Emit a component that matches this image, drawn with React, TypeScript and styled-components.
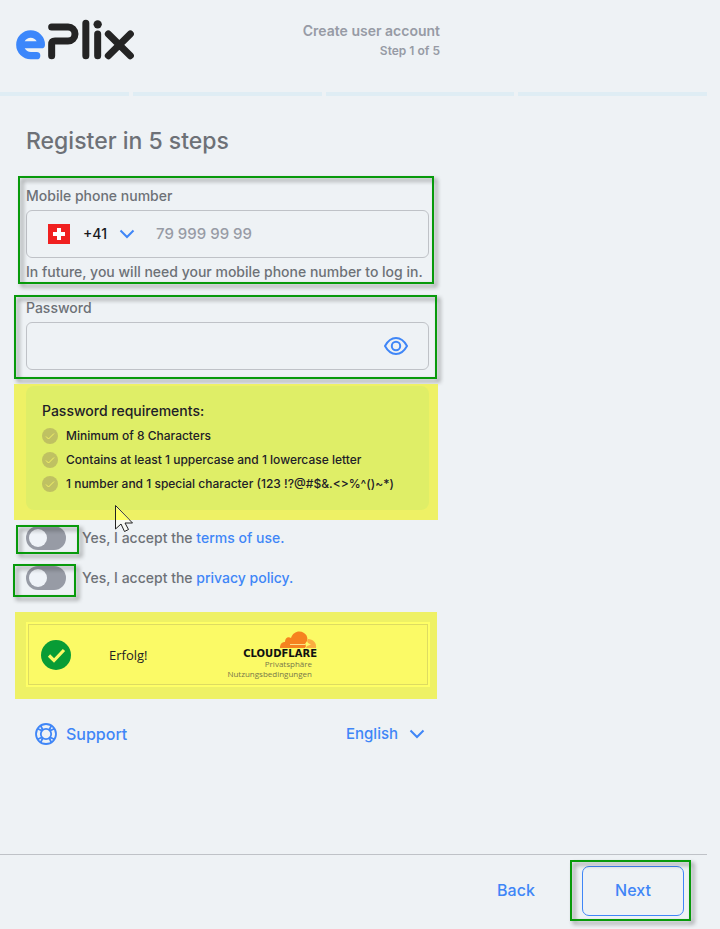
import React from "react";
import styled, { createGlobalStyle, css } from "styled-components";

const blue = "#3f86f7";
const gray = "#6d7177";
const muted = "#979ba5";
const line = "#bfc2c7";
const green = "#079a0b";

const GlobalStyle = createGlobalStyle`
  * { box-sizing: border-box; }
  body {
    margin: 0;
    background: #eef2f5;
    color: ${gray};
    font: 500 14px/20px Inter, "Liberation Sans", sans-serif;
  }
  button, input, select { font: inherit; color: inherit; }
  a { color: ${blue}; text-decoration: none; }
`;

const Page = styled.div`
  min-height: 100vh;
  display: flex;
  flex-direction: column;
  padding-right: 13px;
`;

const Header = styled.header`
  display: flex;
  justify-content: space-between;
  align-items: flex-start;
  width: 100%;
  max-width: 440px;
  height: 92px;
  padding: 19px 0 0 16px;
`;

const HeaderText = styled.div`
  padding-top: 2px;
  text-align: right;
  color: ${muted};
  font-weight: 600;
`;

const StepText = styled.div`
  font-size: 12px;
`;

const Steps = styled.div`
  display: grid;
  grid-template-columns: 129fr 189fr 189fr 189fr;
  gap: 4px;
  height: 4px;
`;

const Step = styled.span`
  background: #dfedf4;
`;

const Main = styled.main`
  width: 100%;
  max-width: 455px;
  padding: 30px 26px 0;
  flex: 1;
`;

const Title = styled.h1`
  margin: 0 0 30px;
  font-size: 23px;
  line-height: 30px;
  font-weight: 500;
`;

const Marked = styled.div<{ $inset: string }>`
  position: relative;
  &::after {
    content: "";
    position: absolute;
    inset: ${(p) => p.$inset};
    border: 2px solid ${green};
    filter: drop-shadow(3px 3px 2px rgba(0, 0, 0, 0.45));
    pointer-events: none;
  }
`;

const Fields = styled.div`
  display: flex;
  flex-direction: column;
  gap: 16px;
`;

const Field = styled.div`
  display: flex;
  flex-direction: column;
  gap: 4px;
  white-space: nowrap;
`;

const InputBox = styled.div`
  display: flex;
  align-items: center;
  height: 48px;
  padding: 0 20px 0 21px;
  border: 1px solid ${line};
  border-radius: 6px;
`;

const TextInput = styled.input`
  flex: 1;
  min-width: 0;
  padding: 0;
  border: 0;
  outline: 0;
  background: transparent;
  font-size: 15px;
  &::placeholder { color: ${muted}; opacity: 1; }
`;

const PlainSelect = styled.select`
  appearance: none;
  border: 0;
  padding: 0;
  background: transparent;
  outline: 0;
`;

const CodeSelect = styled(PlainSelect)`
  width: 36px;
  margin-left: 13px;
  color: #17191d;
`;

const CodeChevron = styled.span`
  display: flex;
  margin-right: 21px;
`;

const IconButton = styled.button`
  display: flex;
  padding: 0;
  border: 0;
  background: transparent;
  color: ${blue};
`;

const Highlight = styled.div<{ $inset: string; $top: number }>`
  position: relative;
  isolation: isolate;
  margin-top: ${(p) => p.$top}px;
  &::before {
    content: "";
    position: absolute;
    inset: ${(p) => p.$inset};
    z-index: -1;
    background: #eef165;
  }
`;

const Requirements = styled.section`
  padding: 15px 16px;
  height: 124px;
  border-radius: 8px;
  background: #dfee67;
  color: #1d2028;
  font-size: 12px;
  white-space: nowrap;
`;

const ReqTitle = styled.h2`
  margin: 0 0 3px;
  font-size: 14px;
  line-height: 20px;
  font-weight: 500;
`;

const ReqList = styled.ul`
  margin: 0;
  padding: 0;
  list-style: none;
`;

const ReqItem = styled.li`
  display: flex;
  align-items: center;
  gap: 8px;
  height: 24px;
`;

const Cursor = styled.svg`
  position: absolute;
  left: 88px;
  top: 118px;
  z-index: 2;
`;

const Consents = styled.div`
  display: flex;
  flex-direction: column;
  gap: 16px;
  margin: 16px 0 0;
`;

const Consent = styled.div`
  display: flex;
  align-items: center;
  gap: 16px;
  height: 24px;
`;

const Toggle = styled.input`
  appearance: none;
  display: block;
  width: 40px;
  height: 24px;
  margin: 0;
  padding: 3px;
  border-radius: 12px;
  background: #979ba5;
  &::before {
    content: "";
    display: block;
    width: 18px;
    height: 18px;
    border-radius: 50%;
    background: #eff3f8;
  }
  &:checked { background: ${blue}; }
  &:checked::before { margin-left: auto; }
`;

const Widget = styled.section`
  height: 65px;
  padding: 2px;
  margin-right: -1px;
  background: #ffff66;
`;

const WidgetInner = styled.div`
  display: flex;
  align-items: center;
  height: 100%;
  padding: 0 110px 0 12px;
  border: 1px solid #dddb62;
  background: #fbfa66;
  color: #222;
  font-family: "Open Sans", "Noto Sans", sans-serif;
  font-weight: 400;
  font-size: 13px;
`;

const Status = styled.span`
  margin-left: 38px;
  flex: 1;
`;

const Vendor = styled.div`
  display: flex;
  flex-direction: column;
  align-items: flex-end;
`;

const VendorName = styled.span`
  font: 700 10px/10px "DejaVu Sans", sans-serif;
  color: #111;
`;

const VendorLink = styled.a`
  margin-right: 5px;
  font-size: 8px;
  line-height: 10px;
  color: #77774a;
`;

const Tools = styled.nav`
  display: flex;
  align-items: center;
  justify-content: space-between;
  height: 24px;
  margin-top: 35px;
  padding: 0 4px 0 8px;
  color: ${blue};
  font-size: 15px;
`;

const Inline = styled.span`
  display: flex;
  align-items: center;
  gap: 10px;
`;

const SupportLink = styled.a`
  display: flex;
  align-items: center;
  gap: 8px;
  font-size: 16px;
`;

const Footer = styled.footer`
  display: flex;
  justify-content: flex-end;
  align-items: center;
  gap: 24px;
  height: 75px;
  padding: 0 23px 2px 0;
  border-top: 1px solid ${line};
`;

const Button = styled.button<{ $outlined?: boolean }>`
  height: 50px;
  width: 84px;
  padding: 0 0 2px;
  border: 0;
  border-radius: 7px;
  background: transparent;
  color: ${blue};
  font-size: 16px;
  ${(p) => p.$outlined && css`
    width: 102px;
    border: 1px solid ${blue};
  `}
`;

const Logo = () => (
  <svg width="118" height="41" viewBox="48 56 354 123" role="img" aria-label="ePlix">
    <path
      fill="#3c87fb"
      fillRule="evenodd"
      d="M92 90A43 43 0 0 1 135 133Q135 144 124 144H74Q80 155 93 155H110A11 11 0 0 1 110 177H92A43.5 43.5 0 0 1 92 90ZM74 123H110Q104 112 92 112Q80 112 74 123Z"
    />
    <g fill="none" stroke="#242424" strokeWidth="21" strokeLinecap="round">
      <path d="M155 80H204A21 21 0 0 1 204 122H165Q155 122 155 133V166" />
      <path d="M257.5 69V166M293 101V166M325 101L391 166M391 101L325 166" />
    </g>
    <circle cx="293" cy="72" r="12.5" fill="#242424" />
  </svg>
);

const Flag = () => (
  <svg width="22" height="20" viewBox="0 0 22 20" aria-hidden="true">
    <path fill="#f02020" d="M0 0h22v20H0z" />
    <path fill="#fff" d="M9 4h4v4h4v4h-4v4H9v-4H5V8h4z" />
  </svg>
);

const Chevron = () => (
  <svg width="16" height="10" viewBox="0 0 16 10" fill="none" stroke={blue} strokeWidth="2" aria-hidden="true">
    <path d="M1.5 1.5 8 8l6.5-6.5" />
  </svg>
);

const Eye = () => (
  <svg width="24" height="20" viewBox="0 0 24 20" fill="none" stroke="currentColor" strokeWidth="2" aria-hidden="true">
    <path d="M1 10C4 4.5 7.5 2 12 2s8 2.5 11 8c-3 5.500-6.500 8-11 8S4 15.500 1 10Z" />
    <circle cx="12" cy="10" r="4.200" />
  </svg>
);

const Tick = () => (
  <svg width="16" height="16" viewBox="0 0 16 16" aria-hidden="true">
    <circle cx="8" cy="8" r="8" fill="#bfc162" />
    <path d="m4 8.500 2.500 2.500L12 5.500" fill="none" stroke="#f5f466" />
  </svg>
);

const Success = () => (
  <svg width="30" height="30" viewBox="0 0 30 30" aria-hidden="true">
    <circle cx="15" cy="15" r="15" fill="#089c35" />
    <path d="m8 15.500 5 5L23 10" fill="none" stroke="#fbfa66" strokeWidth="3.200" />
  </svg>
);

const Cloud = () => (
  <svg width="37" height="18" viewBox="0 0 37 18" aria-hidden="true">
    <path fill="#f6821f" d="M0 17C0 13 2 11 5 11C5 7 8 5 11 7C13 1 19-1 24 2C27 4 28 7 27 10L25 13L26 15L25 17Z" />
    <path fill="#fbad41" d="M28 8C33 8 37 12 36 17H26L27 15L31 13.5L28 12L27 10Z" />
    <path stroke="#fbe08a" d="M10 13.5H25" />
  </svg>
);

const Lifebuoy = () => (
  <svg width="24" height="24" viewBox="0 0 24 24" fill="none" stroke="currentColor" strokeWidth="1.800" aria-hidden="true">
    <circle cx="12" cy="12" r="10" />
    <circle cx="12" cy="12" r="5.200" />
    <path d="m3.800 6.800 4.200 2M6.800 3.800l2 4.200M17.200 3.800l-2 4.200M20.200 6.800l-4.200 2M3.800 17.200l4.200-2M6.800 20.200l2-4.200M17.200 20.200l-2-4.200M20.200 17.200l-4.200-2" />
  </svg>
);

const requirements = [
  "Minimum of 8 Characters",
  "Contains at least 1 uppercase and 1 lowercase letter",
  "1 number and 1 special character (123 !?@#$&.<>%^()~*)",
];

export default function App() {
  return (
    <Page>
      <GlobalStyle />
      <Header>
        <Logo />
        <HeaderText>
          <div>Create user account</div>
          <StepText>Step 1 of 5</StepText>
        </HeaderText>
      </Header>
      <Steps>
        <Step /><Step /><Step /><Step />
      </Steps>
      <Main>
        <Title>Register in 5 steps</Title>
        <Fields>
          <Marked $inset="-10px -5px -2px -8px">
            <Field>
              <label htmlFor="phone">Mobile phone number</label>
              <InputBox>
                <Flag />
                <CodeSelect aria-label="Country code"><option>+41</option></CodeSelect>
                <CodeChevron><Chevron /></CodeChevron>
                <TextInput id="phone" type="tel" placeholder="79 999 99 99" />
              </InputBox>
              <span>In future, you will need your mobile phone number to log in.</span>
            </Field>
          </Marked>
          <Marked $inset="-3px -8px -9px -12px">
            <Field>
              <label htmlFor="password">Password</label>
              <InputBox>
                <TextInput id="password" type="password" />
                <IconButton type="button" aria-label="Show password"><Eye /></IconButton>
              </InputBox>
            </Field>
          </Marked>
        </Fields>
        <Highlight $top={16} $inset="-2px -9px -10px -12px">
          <Requirements>
            <ReqTitle>Password requirements:</ReqTitle>
            <ReqList>
              {requirements.map((text) => (
                <ReqItem key={text}><Tick />{text}</ReqItem>
              ))}
            </ReqList>
          </Requirements>
          <Cursor width="20" height="30" viewBox="0 0 20 30" aria-hidden="true">
            <path d="M1.5 1.500V25L7 20l3.500 7.500 4-2L11 19h7.500Z" fill="#f8faf5" stroke="#222" />
            <path d="M2 3V16H15Z" fill="#ffff66" />
          </Cursor>
        </Highlight>
        <Consents>
          <Consent>
            <Marked $inset="-1px -13px -4px -10px">
              <Toggle type="checkbox" id="terms" />
            </Marked>
            <label htmlFor="terms">Yes, I accept the <a href="#terms">terms of use.</a></label>
          </Consent>
          <Consent>
            <Marked $inset="-2px -10px -7px -13px">
              <Toggle type="checkbox" id="privacy" />
            </Marked>
            <label htmlFor="privacy">Yes, I accept the <a href="#privacy">privacy policy.</a></label>
          </Consent>
        </Consents>
        <Highlight $top={32} $inset="-10px -8px -12px -11px">
          <Widget>
            <WidgetInner>
              <Success />
              <Status>Erfolg!</Status>
              <Vendor>
                <Cloud />
                <VendorName>CLOUDFLARE</VendorName>
                <VendorLink href="#privacy-info">Privatsphäre</VendorLink>
                <VendorLink href="#conditions">Nutzungsbedingungen</VendorLink>
              </Vendor>
            </WidgetInner>
          </Widget>
        </Highlight>
        <Tools>
          <SupportLink href="#support"><Lifebuoy />Support</SupportLink>
          <Inline>
            <PlainSelect aria-label="Language"><option>English</option></PlainSelect>
            <Chevron />
          </Inline>
        </Tools>
      </Main>
      <Footer>
        <Button type="button">Back</Button>
        <Marked $inset="-6px -7px -5px -12px">
          <Button type="button" $outlined>Next</Button>
        </Marked>
      </Footer>
    </Page>
  );
}
